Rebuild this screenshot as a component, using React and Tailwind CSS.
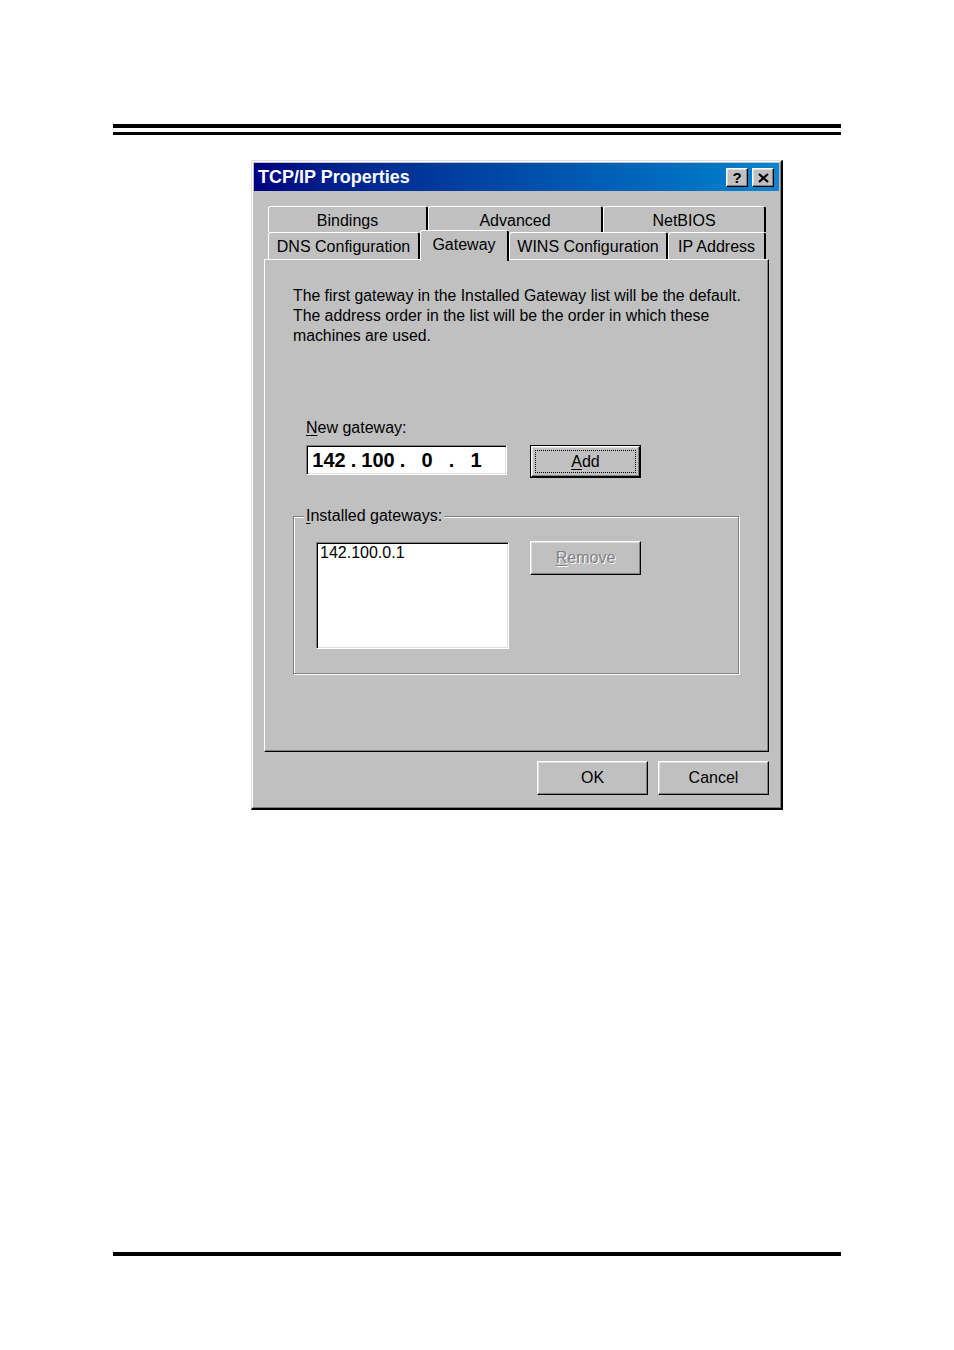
import React from 'react'

const raised =
  'bg-[#c0c0c0] border-t border-l border-r border-b border-t-white border-l-white border-r-black border-b-black shadow-[inset_-1px_-1px_0_#808080,inset_1px_1px_0_#dfdfdf]'
const sunken =
  'bg-white border-t border-l border-r border-b border-t-[#808080] border-l-[#808080] border-r-white border-b-white shadow-[inset_1px_1px_0_#000,inset_-1px_-1px_0_#dfdfdf]'

function Tab({ label, width, selected }) {
  return (
    <div
      className={`${width} ${
        selected ? 'h-[31px] -mb-[2px] relative z-10 pb-[2px]' : 'h-full pt-[2px]'
      } flex items-center justify-center bg-[#c0c0c0] rounded-t-[3px] border-t border-l border-r-2 border-t-white border-l-white border-r-black`}
    >
      <span className="leading-none">{label}</span>
    </div>
  )
}

function Button({ children, className = '' }) {
  return (
    <div className={`${raised} w-[111px] h-[34px] flex items-center justify-center ${className}`}>
      {children}
    </div>
  )
}

export default function App() {
  return (
    <div className="w-[954px] h-[1350px] bg-white pt-[124px] text-black font-['Liberation_Sans',Arial,sans-serif] text-[16px]">
      {/* header rule */}
      <div className="ml-[113px] w-[728px]">
        <div className="h-[4px] bg-black" />
        <div className="h-[3px] mt-[4px] bg-black" />
      </div>

      {/* dialog window */}
      <div className="ml-[251px] mt-[25px] w-[532px] h-[650px] bg-[#c0c0c0] border-t border-l border-r-2 border-b-2 border-t-[#dfdfdf] border-l-[#dfdfdf] border-r-black border-b-black">
        <div className="h-full flex flex-col border-t border-l border-r border-b border-t-white border-l-white border-r-[#808080] border-b-[#808080]">
          {/* title bar */}
          <div className="mx-[1px] mt-[1px] h-[28px] flex items-center justify-between pl-[4px] pr-[5px] bg-linear-to-r from-[#000080] to-[#1084d0]">
            <span className="text-white font-bold text-[18px] leading-none">TCP/IP Properties</span>
            <div className="flex gap-[4px] mt-[1px]">
              <div className={`${raised} w-[22px] h-[19px] flex items-center justify-center`}>
                <span className="font-bold text-[15px] leading-none">?</span>
              </div>
              <div className={`${raised} w-[22px] h-[19px] flex items-center justify-center`}>
                <svg width="11" height="10" viewBox="0 0 11 10">
                  <path d="M1 1 L10 9 M10 1 L1 9" stroke="#000" strokeWidth="2.2" fill="none" />
                </svg>
              </div>
            </div>
          </div>

          <div className="pt-[15px]">
            {/* tabs */}
            <div className="ml-[15px]">
              <div className="flex h-[26px]">
                <Tab label="Bindings" width="w-[160px]" />
                <Tab label="Advanced" width="w-[175px]" />
                <Tab label="NetBIOS" width="w-[163px]" />
              </div>
              <div className="flex h-[27px] items-end">
                <Tab label="DNS Configuration" width="w-[152px]" />
                <Tab label="Gateway" width="w-[89px]" selected />
                <Tab label="WINS Configuration" width="w-[159px]" />
                <Tab label="IP Address" width="w-[98px]" />
              </div>
            </div>

            {/* tab panel */}
            <div className="ml-[11px] w-[505px] h-[493px] border-t border-l border-r border-b border-t-white border-l-white border-r-black border-b-black shadow-[inset_-1px_-1px_0_#808080] pl-[28px] pt-[26px]">
              <p className="leading-[20px] text-[15.8px]">
                The first gateway in the Installed Gateway list will be the default.
                <br />
                The address order in the list will be the order in which these
                <br />
                machines are used.
              </p>

              <div className="ml-[13px] mt-[72px]">
                <div className="leading-[20px]">
                  <u className="underline-offset-2">N</u>ew gateway:
                </div>
                <div className="flex items-start mt-[7px]">
                  <div className={`${sunken} w-[201px] h-[30px] flex items-center pl-[2px] font-bold text-[20px] leading-none`}>
                    <span className="w-[40px] text-center">142</span>
                    <span className="w-[9px] text-center">.</span>
                    <span className="w-[40px] text-center">100</span>
                    <span className="w-[9px] text-center">.</span>
                    <span className="w-[40px] text-center">0</span>
                    <span className="w-[9px] text-center">.</span>
                    <span className="w-[40px] text-center">1</span>
                  </div>
                  <div className="ml-[23px] w-[111px] h-[33px] border border-black">
                    <div className="h-full border-t border-l border-r border-b border-t-white border-l-white border-r-black border-b-black shadow-[inset_-1px_-1px_0_#808080,inset_1px_1px_0_#dfdfdf] p-[3px] flex">
                      <div className="flex-1 flex items-center justify-center border border-dotted border-black">
                        <span className="leading-none">
                          <u className="underline-offset-2">A</u>dd
                        </span>
                      </div>
                    </div>
                  </div>
                </div>
              </div>

              {/* installed gateways group */}
              <fieldset className="mt-[28px] w-[446px] border border-[#808080] shadow-[1px_1px_0_#fff,inset_1px_1px_0_#fff] pl-[10px] pb-[24px]">
                <legend className="px-[2px] leading-[20px] bg-[#c0c0c0]">
                  <u className="underline-offset-2">I</u>nstalled gateways:
                </legend>
                <div className="flex items-start mt-[16px] ml-[12px]">
                  <div className={`${sunken} w-[193px] h-[107px] pl-[3px] leading-[20px]`}>142.100.0.1</div>
                  <Button className="ml-[21px] -mt-[1px] h-[33px]">
                    <span className="leading-none text-[#808080] [text-shadow:1px_1px_0_#fff]">
                      <u className="underline-offset-2">R</u>emove
                    </span>
                  </Button>
                </div>
              </fieldset>
            </div>

            {/* dialog buttons */}
            <div className="flex justify-end gap-[10px] mt-[9px] pr-[11px]">
              <Button>OK</Button>
              <Button>Cancel</Button>
            </div>
          </div>
        </div>
      </div>

      {/* footer rule */}
      <div className="ml-[113px] mt-[442px] w-[728px] h-[4px] bg-black" />
    </div>
  )
}
